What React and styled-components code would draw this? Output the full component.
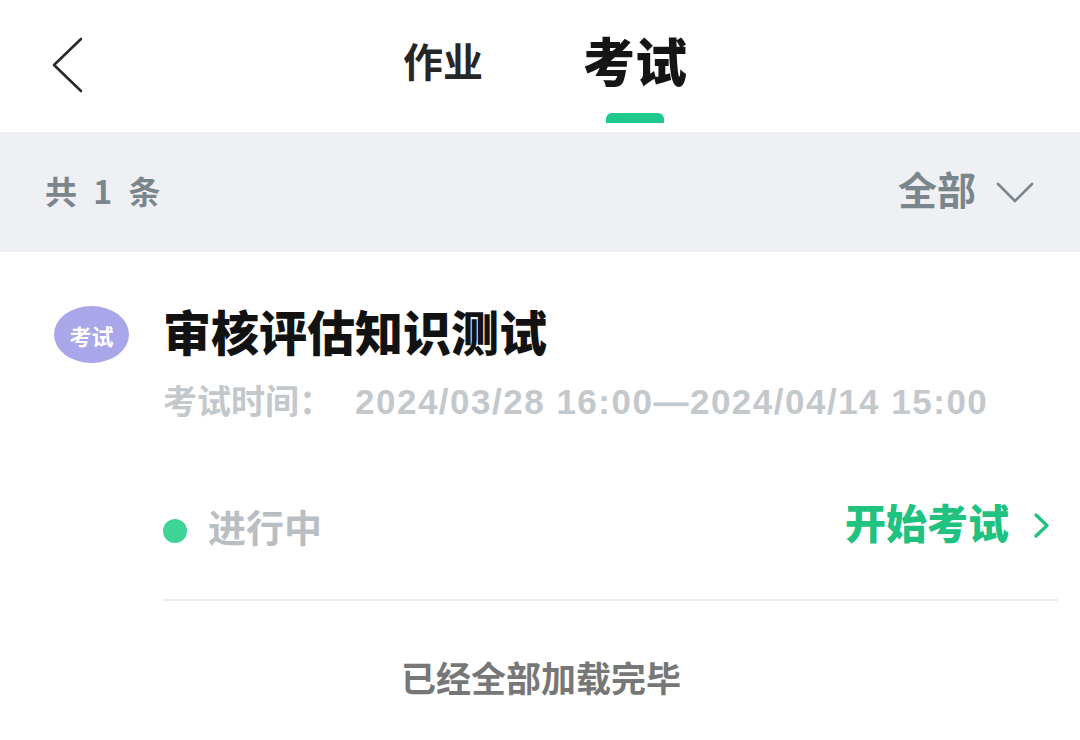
import React from "react";
import styled, { createGlobalStyle } from "styled-components";

const Global = createGlobalStyle`
  html, body { margin: 0; padding: 0; background: #ffffff; }
  body { font-family: "Liberation Sans", "Noto Sans CJK SC", sans-serif; }
  * { box-sizing: border-box; }
`;

const Page = styled.div`
  width: 1080px;
  height: 740px;
  background: #ffffff;
  overflow: hidden;
  display: flex;
  flex-direction: column;
`;

const Header = styled.header`
  height: 132px;
  display: grid;
  grid-template-columns: 1fr auto 1fr;
  align-items: start;
`;

const BackButton = styled.button`
  border: 0;
  background: none;
  padding: 0;
  margin: 37px 0 0 51px;
  width: 34px;
  height: 56px;
  justify-self: start;
  display: flex;
`;

const Tabs = styled.nav`
  display: flex;
  gap: 100px;
  align-items: flex-start;
  padding-top: 34px;
  padding-left: 10px;
`;

const Tab = styled.div`
  display: flex;
  flex-direction: column;
  align-items: center;
`;

const TabLabel = styled.span`
  font-family: "Noto Sans CJK SC", sans-serif;
  font-weight: ${(p) => (p.$active ? 900 : 700)};
  font-size: ${(p) => (p.$active ? "52px" : "40px")};
  line-height: 52px;
  height: 52px;
  color: ${(p) => (p.$active ? "#151515" : "#262626")};
`;

const Indicator = styled.div`
  margin-top: 27px;
  width: 58px;
  height: 10px;
  border-radius: 6px 6px 0 0;
  background: #1ec98b;
`;

const FilterBar = styled.div`
  height: 120px;
  background: #eef0f3;
  display: flex;
  align-items: center;
  justify-content: space-between;
  padding: 0 46px 0 45px;
`;

const Count = styled.span`
  font-family: "Noto Sans CJK SC", sans-serif;
  font-weight: 700;
  font-size: 32px;
  color: #7b868c;
  word-spacing: 9px;
  margin-bottom: 4px;
`;

const FilterSelect = styled.div`
  display: flex;
  align-items: center;
  gap: 20px;
  font-family: "Noto Sans CJK SC", sans-serif;
  font-weight: 700;
  font-size: 39px;
  color: #7b868c;
`;

const FilterText = styled.span`
  margin-bottom: 8px;
`;

const Card = styled.div`
  display: grid;
  grid-template-columns: 75px 1fr;
  column-gap: 34px;
  padding: 48px 22px 0 54px;
`;

const Badge = styled.div`
  margin-top: 6px;
  width: 75px;
  height: 57px;
  border-radius: 50%;
  background: #a9a6e9;
  color: #ffffff;
  display: flex;
  align-items: center;
  justify-content: center;
  font-family: "Noto Sans CJK SC", sans-serif;
  font-weight: 700;
  font-size: 22px;
`;

const Content = styled.div`
  display: flex;
  flex-direction: column;
`;

const Title = styled.h1`
  margin: 0;
  font-family: "Noto Sans CJK SC", sans-serif;
  font-weight: 900;
  font-size: 48px;
  line-height: 60px;
  color: #121212;
`;

const TimeLine = styled.div`
  margin-top: 18px;
  line-height: 44px;
  font-weight: 700;
  color: #c3c8cc;
  white-space: nowrap;
  display: flex;
  align-items: baseline;
`;

const TimeLabel = styled.span`
  font-family: "Noto Sans CJK SC", sans-serif;
  font-size: 34px;
  margin-right: 22px;
`;

const TimeValue = styled.span`
  font-family: "Liberation Sans", sans-serif;
  font-size: 35px;
  letter-spacing: 1.5px;
`;

const StatusRow = styled.div`
  margin-top: 77px;
  height: 60px;
  display: flex;
  align-items: center;
  justify-content: space-between;
`;

const Status = styled.div`
  display: flex;
  align-items: center;
  gap: 21px;
  font-family: "Noto Sans CJK SC", sans-serif;
  font-weight: 700;
  font-size: 38px;
  color: #b9bec2;
`;

const StatusText = styled.span`
  margin-bottom: 12px;
`;

const Dot = styled.span`
  width: 24px;
  height: 24px;
  border-radius: 50%;
  background: #3ed495;
`;

const StartLink = styled.a`
  display: flex;
  align-items: center;
  gap: 24px;
  font-family: "Noto Sans CJK SC", sans-serif;
  font-weight: 900;
  font-size: 41px;
  color: #1fc27e;
  text-decoration: none;
  padding-right: 8px;
  margin-bottom: 12px;
`;

const StartText = styled.span`
  margin-bottom: 8px;
`;

const Divider = styled.hr`
  margin: 38px 0 0 0;
  border: 0;
  height: 2px;
  background: #ececec;
`;

const Footer = styled.div`
  margin-top: 51px;
  text-align: center;
  font-family: "Noto Sans CJK SC", sans-serif;
  font-weight: 700;
  font-size: 35px;
  line-height: 50px;
  color: #777777;
  padding-left: 2px;
`;

export default function App() {
  return (
    <Page>
      <Global />
      <Header>
        <BackButton aria-label="返回">
          <svg width="34" height="56" viewBox="0 0 34 56" fill="none">
            <polyline
              points="30,2 3,28 30,54"
              stroke="#2a2a2a"
              strokeWidth="2.6"
              strokeLinecap="round"
              strokeLinejoin="round"
            />
          </svg>
        </BackButton>
        <Tabs>
          <Tab>
            <TabLabel>作业</TabLabel>
          </Tab>
          <Tab>
            <TabLabel $active>考试</TabLabel>
            <Indicator />
          </Tab>
        </Tabs>
        <div />
      </Header>
      <FilterBar>
        <Count>共 1 条</Count>
        <FilterSelect>
          <FilterText>全部</FilterText>
          <svg width="38" height="22" viewBox="0 0 38 22" fill="none">
            <polyline
              points="2,3 19,20 36,3"
              stroke="#7b868c"
              strokeWidth="2.6"
              strokeLinecap="round"
              strokeLinejoin="round"
            />
          </svg>
        </FilterSelect>
      </FilterBar>
      <Card>
        <Badge>考试</Badge>
        <Content>
          <Title>审核评估知识测试</Title>
          <TimeLine>
            <TimeLabel>考试时间：</TimeLabel>
            <TimeValue>2024/03/28 16:00—2024/04/14 15:00</TimeValue>
          </TimeLine>
          <StatusRow>
            <Status>
              <Dot />
              <StatusText>进行中</StatusText>
            </Status>
            <StartLink href="#">
              <StartText>开始考试</StartText>
              <svg width="17" height="27" viewBox="0 0 17 27" fill="none">
                <polyline
                  points="3,3 14,13.5 3,24"
                  stroke="#1fc27e"
                  strokeWidth="3.4"
                  strokeLinecap="round"
                  strokeLinejoin="round"
                />
              </svg>
            </StartLink>
          </StatusRow>
          <Divider />
        </Content>
      </Card>
      <Footer>已经全部加载完毕</Footer>
    </Page>
  );
}
